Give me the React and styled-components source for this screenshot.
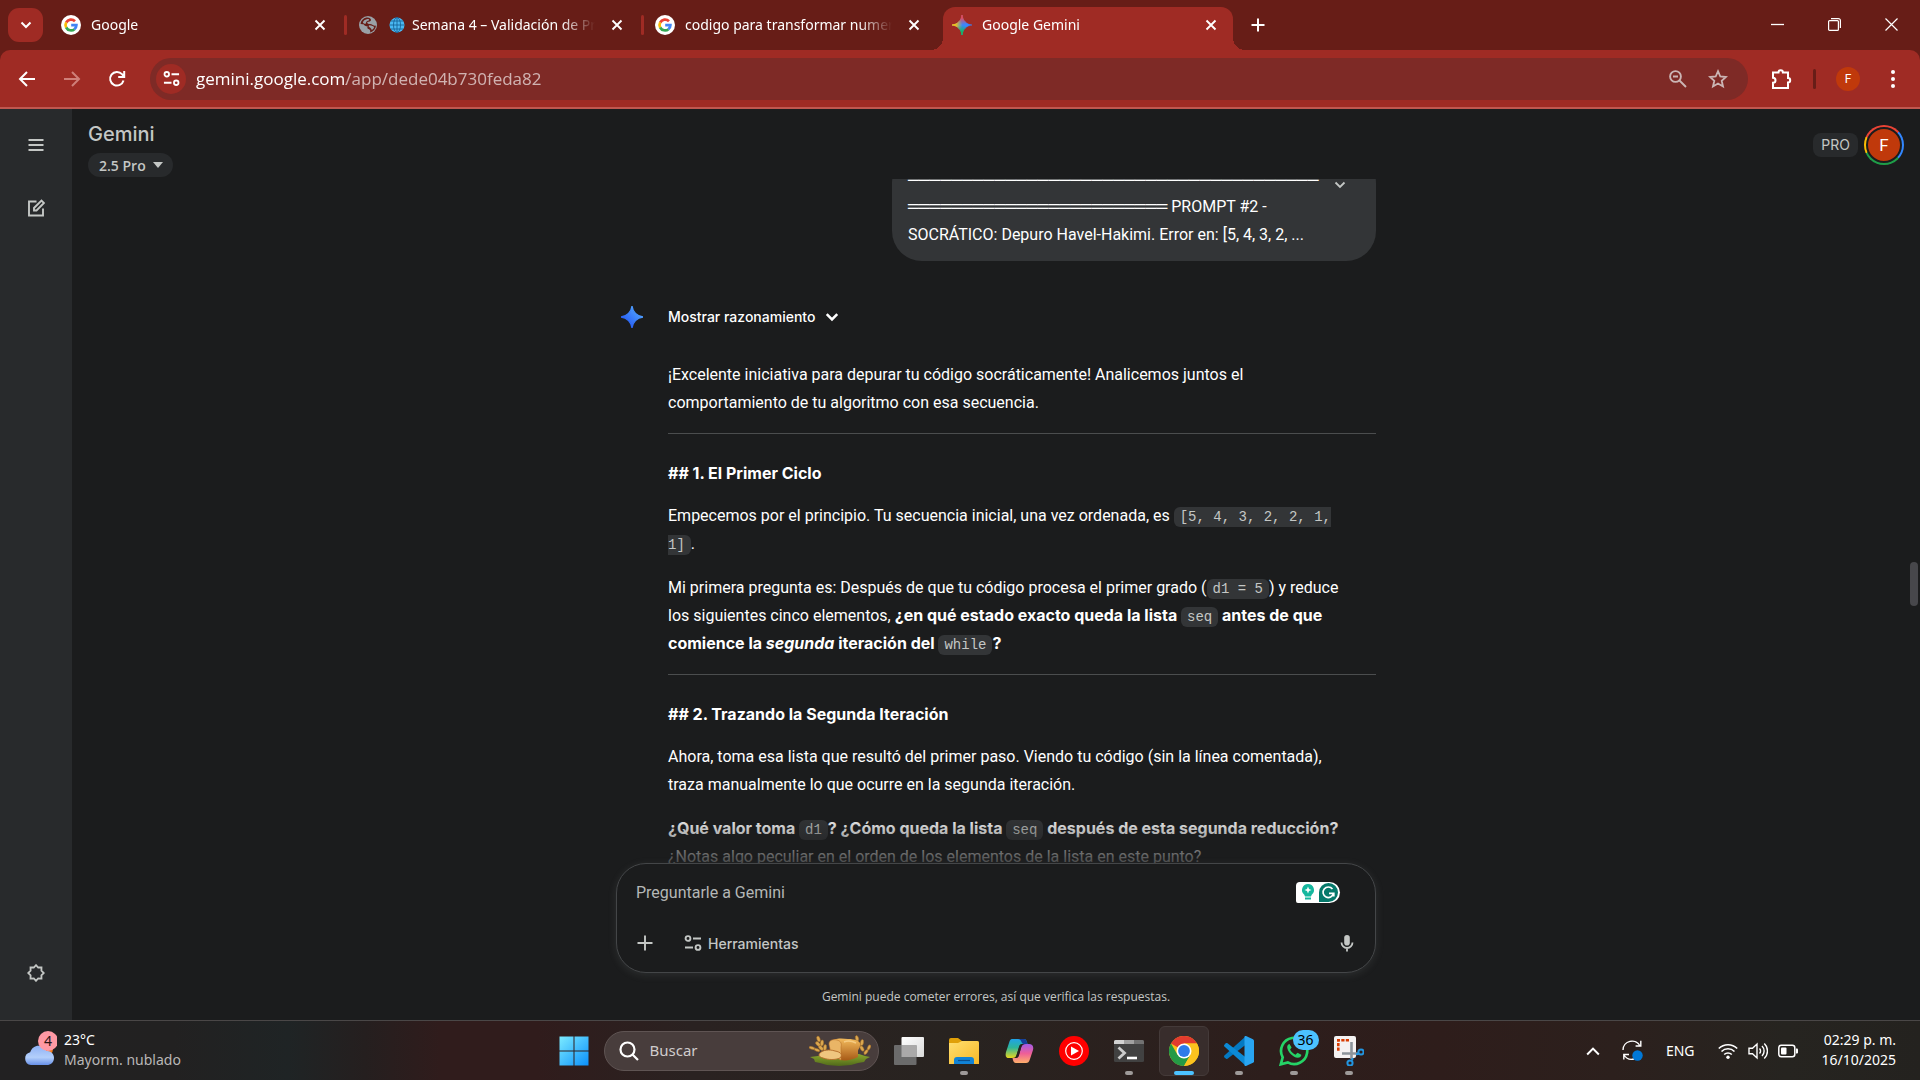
import React from 'react';
import styled, { createGlobalStyle, css } from 'styled-components';

const fonts = {
  system: '"Noto Sans", "Open Sans", sans-serif',
  text: 'Roboto, "Liberation Sans", sans-serif',
  brand: 'Inter, Roboto, sans-serif',
  mono: '"Liberation Mono", "DejaVu Sans Mono", monospace',
};

const GlobalStyle = createGlobalStyle`
  *, *::before, *::after { box-sizing: border-box; }
  html, body { margin: 0; background: #1b1c1d; }
  body { font-family: ${fonts.text}; color: #fff; overflow: hidden; }
  button { padding: 0; border: 0; background: none; color: inherit; font: inherit; cursor: pointer; }
  input, textarea { border: 0; outline: 0; background: none; color: inherit; font: inherit; padding: 0; }
  svg { display: block; flex: none; }
`;

const Screen = styled.div`
  display: flex;
  flex-direction: column;
  height: 100vh;
`;

/* ---------- browser frame ---------- */

const BrowserFrame = styled.header`
  background: #671d17;
  font-family: ${fonts.system};
`;

const TabStrip = styled.div`
  display: flex;
  align-items: stretch;
  height: 50px;
`;

const TabSearch = styled.button`
  display: grid;
  place-items: center;
  align-self: center;
  width: 35px;
  height: 34px;
  margin: 0 9px 0 8px;
  border-radius: 11px;
  background: #9f2b24;
`;

const Tab = styled.div`
  position: relative;
  display: flex;
  align-items: center;
  flex: 0 1 290px;
  min-width: 0;
  gap: 10px;
  margin-top: 7px;
  padding: 0 12px 7px 9px;
  font-size: 14px;
  line-height: 20px;
  ${({ $active }) => $active && css`
    background: #9f2b24;
    border-radius: 12px 12px 0 0;
    &::before, &::after {
      content: '';
      position: absolute;
      bottom: 0;
      width: 12px;
      height: 12px;
    }
    &::before { right: 100%; background: radial-gradient(circle at 0 0, transparent 12px, #9f2b24 12px); }
    &::after { left: 100%; background: radial-gradient(circle at 100% 0, transparent 12px, #9f2b24 12px); }
  `}
`;

const TabTitle = styled.span`
  flex: 1;
  min-width: 0;
  overflow: hidden;
  white-space: nowrap;
  mask-image: linear-gradient(90deg, #000 calc(100% - 36px), transparent calc(100% - 2px));
`;

const IconButton = styled.button`
  display: grid;
  place-items: center;
  flex: none;
  width: ${({ $size = 20 }) => $size}px;
  height: ${({ $size = 20 }) => $size}px;
  border-radius: 50%;
  color: ${({ $color = '#fff' }) => $color};
`;

const TabDivider = styled.i`
  flex: none;
  align-self: center;
  width: 3px;
  height: 20px;
  margin: 0 2px;
  border-radius: 2px;
  background: ${({ $hidden }) => ($hidden ? 'transparent' : '#9f2b24')};
`;

const NewTab = styled(IconButton)`
  align-self: center;
  margin-left: 10px;
`;

const WindowButtons = styled.div`
  display: flex;
  margin-left: auto;
`;

const WindowButton = styled.button`
  display: grid;
  place-items: center;
  width: 57px;
  height: 48px;
`;

const Toolbar = styled.div`
  display: flex;
  align-items: center;
  height: 59px;
  padding: 0 12px;
  border-bottom: 2px solid #c0574f;
  border-radius: 10px 10px 0 0;
  background: #9f2b24;
`;

const NavButtons = styled.nav`
  display: flex;
  gap: 15px;
  margin-right: 18px;
`;

const AddressBar = styled.form`
  display: flex;
  align-items: center;
  flex: 1;
  height: 42px;
  padding: 0 15px 0 6px;
  border-radius: 21px;
  background: #7e2a26;
`;

const SiteInfo = styled(IconButton)`
  margin-right: 10px;
  background: #9f2b24;
`;

const AddressInput = styled.input`
  flex: 1;
  min-width: 0;
  height: 28px;
  font-family: "Open Sans", "Noto Sans", sans-serif;
  font-size: 17px;
  mask-image: linear-gradient(90deg, #000 150px, rgba(0, 0, 0, 0.64) 150px);
`;

const AddressActions = styled.div`
  display: flex;
  gap: 10px;
`;

const ToolbarActions = styled.div`
  display: flex;
  align-items: center;
  margin-left: 18px;
`;

const ToolbarDivider = styled.i`
  width: 3px;
  height: 20px;
  margin: 0 20px 0 17px;
  border-radius: 2px;
  background: #671d17;
`;

const ProfileBadge = styled.button`
  width: 24px;
  height: 24px;
  margin-right: 18px;
  border-radius: 50%;
  background: #c0390b;
  font-family: ${fonts.text};
  font-size: 12px;
`;

/* ---------- application ---------- */

const AppArea = styled.div`
  display: flex;
  flex: 1;
  min-height: 0;
  background: #1b1c1d;
`;

const SideRail = styled.aside`
  display: flex;
  flex-direction: column;
  align-items: center;
  gap: 27px;
  width: 72px;
  padding: 18px 0 29px;
  background: #282a2c;
`;

const RailSpacer = styled.span`
  flex: 1;
`;

const Workspace = styled.div`
  position: relative;
  display: flex;
  flex-direction: column;
  flex: 1;
  min-width: 0;
`;

const TopBar = styled.div`
  display: flex;
  justify-content: space-between;
  flex: none;
  height: 70px;
  padding: 12px 16px 0;
  color: #c4c7c5;
  font-family: ${fonts.brand};
`;

const Brand = styled.h1`
  margin: 0 0 6px;
  font-size: 20px;
  font-weight: 500;
  line-height: 26px;
`;

const ModelButton = styled.button`
  display: flex;
  align-items: center;
  gap: 7px;
  height: 24px;
  padding: 0 10px 0 11px;
  border-radius: 12px;
  background: #282a2c;
  font-family: "Open Sans", sans-serif;
  font-size: 14px;
  font-weight: 600;
`;

const Account = styled.div`
  display: flex;
  align-items: center;
  align-self: flex-start;
  gap: 6px;
  height: 48px;
`;

const PlanBadge = styled.span`
  padding: 0 8px;
  border-radius: 8px;
  background: #282a2c;
  font-size: 14px;
  line-height: 24px;
`;

const AvatarRing = styled.button`
  width: 40px;
  height: 40px;
  padding: 2px;
  border-radius: 50%;
  background: conic-gradient(#ea4335 0 48deg, #3186ff 48deg 132deg, #1e9e48 132deg 246deg, #fbbc04 246deg 294deg, #ea4335 294deg);
`;

const Avatar = styled.span`
  display: grid;
  place-items: center;
  height: 36px;
  border: 2px solid #1b1c1d;
  border-radius: 50%;
  background: #c0390b;
  color: #fff;
  font-family: ${fonts.text};
  font-size: 17px;
`;

const Chat = styled.main`
  flex: 1;
  min-height: 0;
  overflow: hidden;
`;

const Column = styled.div`
  width: 100%;
  max-width: 760px;
  margin: 0 auto;
`;

const PromptBubble = styled.section`
  display: flex;
  width: 484px;
  margin: -26px 0 0 auto;
  padding: 12px 26px 12px 16px;
  border-radius: 30px;
  background: #333537;
`;

const PromptText = styled.p`
  flex: 1;
  margin: 0;
  font-size: 16px;
  line-height: 28px;
  white-space: nowrap;
`;

const DoubleRule = styled.span`
  font-family: ${fonts.mono};
  font-size: 18px;
  line-height: 20px;
`;

const ExpandButton = styled(IconButton)`
  margin-top: 10px;
`;

const Answer = styled.article`
  display: flex;
  gap: 25px;
  padding: 42px 0 0 5px;
`;

const AnswerMark = styled.span`
  display: grid;
  place-items: center;
  align-self: flex-start;
  width: 22px;
  height: 28px;
`;

const AnswerBody = styled.div`
  flex: 1;
  font-size: 16px;
  line-height: 28px;
  white-space: nowrap;

  p { margin: 0 0 16px; }
  strong, h3 { font-family: ${fonts.brand}; font-weight: 700; }
  strong { line-height: 20px; }
  h3 { margin: 0 0 15px; font-size: 16px; line-height: 28px; }
  hr { height: 1px; margin: 16px 0 25px; border: 0; background: #4b4d4e; }
  code {
    padding: 2px 6px;
    border-radius: 6px;
    background: #333537;
    color: #c4c7c5;
    font-family: ${fonts.mono};
    font-size: 14px;
    font-weight: 400;
    line-height: 20px;
  }
`;

const ReasoningToggle = styled.button`
  display: flex;
  align-items: center;
  gap: 10px;
  height: 28px;
  margin-bottom: 30px;
  font-family: ${fonts.brand};
  font-size: 14px;
  font-weight: 500;
`;

const Footer = styled.footer`
  position: relative;
  flex: none;
  background: #1b1c1d;
  &::before {
    content: '';
    position: absolute;
    inset: -50px 0 100%;
    background: linear-gradient(rgba(27, 28, 29, 0), rgba(27, 28, 29, 0.8));
  }
`;

const Composer = styled.form`
  position: relative;
  display: flex;
  flex-direction: column;
  justify-content: space-between;
  height: 110px;
  padding: 14px 16px 17px 19px;
  border: 1px solid #444648;
  border-radius: 30px;
  background: #1b1c1d;
  box-shadow: 0 2px 8px rgba(154, 160, 166, 0.14);
`;

const ComposerRow = styled.div`
  display: flex;
  align-items: center;
  justify-content: space-between;
`;

const PromptInput = styled.input`
  flex: 1;
  height: 28px;
  font-size: 16px;
  &::placeholder { color: #b4b7b6; opacity: 1; }
`;

const WritingBadge = styled.button`
  display: flex;
  align-items: center;
  gap: 2px;
  width: 44px;
  height: 21px;
  margin-right: 19px;
  padding: 0 2px 0 3px;
  border-radius: 4px 11px 11px 2px;
  background: #fff;
`;

const ComposerTools = styled.div`
  display: flex;
  align-items: center;
  gap: 30px;
  color: #c4c7c5;
`;

const ToolsButton = styled.button`
  display: flex;
  align-items: center;
  gap: 6px;
  font-family: ${fonts.brand};
  font-size: 14px;
  font-weight: 500;
`;

const Disclaimer = styled.p`
  margin: 0;
  padding: 13px 0 13px;
  color: #c4c7c5;
  font-family: "Open Sans", sans-serif;
  font-size: 12px;
  line-height: 21px;
  text-align: center;
`;

const ScrollThumb = styled.i`
  position: absolute;
  top: 453px;
  right: 2px;
  width: 8px;
  height: 44px;
  border-radius: 4px;
  background: #47474b;
`;

/* ---------- taskbar ---------- */

const Taskbar = styled.footer`
  display: grid;
  grid-template-columns: 1fr auto 1fr;
  align-items: center;
  flex: none;
  height: 60px;
  border-top: 1px solid #4a4747;
  background: linear-gradient(90deg, #222122 0, #222121 9%, #1f2425 15%, #251f1f 19%, #301c1c 23%, #301c1c 28%, #2a2221 36%, #282320 50%, #2d1e1c 66%, #2e1d1b 75%, #2c201d 84%, #262420 93%, #24221f 100%);
  font-family: ${fonts.system};
`;

const Weather = styled.button`
  display: flex;
  align-items: center;
  gap: 7px;
  margin-left: 24px;
  padding-bottom: 2px;
  text-align: left;
  font-size: 14px;
  line-height: 20px;
`;

const WeatherDetail = styled.span`
  display: block;
  color: ${({ $muted }) => ($muted ? '#b9b7b7' : '#fff')};
`;

const TaskList = styled.div`
  display: flex;
  align-items: center;
  gap: 5px;
  padding-left: 2px;
`;

const TaskButton = styled.button`
  position: relative;
  display: grid;
  place-items: center;
  width: 50px;
  height: 50px;
  border: 1px solid ${({ $active }) => ($active ? '#443a39' : 'transparent')};
  border-radius: 6px;
  background: ${({ $active }) => ($active ? '#382d2c' : 'none')};
  &::after {
    content: '';
    position: absolute;
    bottom: 0;
    left: 50%;
    width: ${({ $active }) => ($active ? 20 : 8)}px;
    height: 4px;
    border-radius: 2px;
    background: ${({ $active }) => ($active ? '#4cc2ff' : '#9e9a99')};
    transform: translateX(-50%);
    display: ${({ $running }) => ($running ? 'block' : 'none')};
  }
`;

const CountBadge = styled.span`
  position: absolute;
  top: 3px;
  right: -1px;
  min-width: 26px;
  border-radius: 10px;
  background: #4cc2ff;
  color: #000;
  font-size: 14px;
  line-height: 20px;
  text-align: center;
`;

const TaskSearch = styled.label`
  display: flex;
  align-items: center;
  gap: 11px;
  width: 275px;
  height: 40px;
  padding: 0 7px 0 14px;
  border: 1px solid #5f5453;
  border-radius: 20px;
  background: #483d3c;
`;

const TaskSearchInput = styled.input`
  flex: 1;
  min-width: 0;
  padding-bottom: 2px;
  font-size: 15px;
  &::placeholder { color: #d0cccc; opacity: 1; }
`;

const Tray = styled.div`
  display: flex;
  align-items: center;
  justify-content: flex-end;
  padding-right: 24px;
`;

const TrayButton = styled.button`
  display: flex;
  align-items: center;
  gap: 10px;
  margin-right: ${({ $gap = 20 }) => $gap}px;
  font-size: 14px;
`;

const Clock = styled.time`
  padding-bottom: 2px;
  font-size: 14px;
  line-height: 20px;
  text-align: right;
`;

/* ---------- icons ---------- */

const Stroke = ({ size = 20, box = 20, w = 2, children, ...rest }) => (
  <svg width={size} height={size} viewBox={`0 0 ${box} ${box}`} fill="none" stroke="currentColor" strokeWidth={w} aria-hidden="true" {...rest}>
    {children}
  </svg>
);

const Chevron = ({ size = 12, w = 2, up }) => (
  <Stroke size={size} box={12} w={w}>
    <path d={up ? 'M1 9l5-5 5 5' : 'M1.5 3.5L6 8l4.500-4.500'} />
  </Stroke>
);

const CloseIcon = () => (
  <Stroke size={12} box={12} w={1.9}><path d="M1.500 1.500l9 9M10.500 1.500l-9 9" /></Stroke>
);

const GoogleFavicon = () => (
  <svg width="20" height="20" viewBox="0 0 20 20" aria-hidden="true">
    <circle cx="10" cy="10" r="10" fill="#fff" />
    <g fill="none" strokeWidth="2.700">
      <path d="M14 6.200A5.500 5.500 0 0 0 5.200 7.500" stroke="#ea4335" />
      <path d="M5.200 7.400a5.500 5.500 0 0 0 0 5.200" stroke="#fbbc05" />
      <path d="M5.200 12.500a5.500 5.500 0 0 0 8.300 1.700" stroke="#34a853" />
      <path d="M13.400 14.200A5.500 5.500 0 0 0 15.400 10.100H10.200" stroke="#4285f4" />
    </g>
  </svg>
);

const GlobeFavicon = () => (
  <svg width="20" height="20" viewBox="0 0 20 20" aria-hidden="true">
    <circle cx="10" cy="10" r="9" fill="#9aa0a6" />
    <path d="M8.500 2.500c2.500-.4 4.500.8 4.500 2.400 0 1.400-1.500 1.600-3 1.800-1 .2-1 1.200-.2 1.800 1.200.8 3.200.3 5 1.500 1.500 1 2.200.9 3.200.5-.3 3.500-2.600 6.200-6 7 .6-1.400.2-2.700-1-3.200-1.600-.6-2.200-1.700-1.200-2.900-2-.1-3.700-1-4.600-2.400-.9.300-1.800.3-2.700-.2.500-3.200 2.700-5.600 6-6.300z" fill="#671d17" />
    <path d="M8.700 4.300c1.500-.5 2.600 0 2.400.8-.2.900-1.800.6-2.700 1.600-.8 1 .1 1.900-1 2.100-1 .1-2-.4-2.500-1.400.5-1.600 2-2.700 3.800-3.100zM11.500 10.300c1.500-.2 3 .7 4.700 1.700-.5 1.600-1.500 2.600-2.500 3-.2-1.500-1.500-2.100-2.500-2.900-.8-.7-.6-1.600.3-1.800z" fill="#9aa0a6" />
  </svg>
);

const GlobeDrawing = styled.svg`
  display: inline-block;
  margin: 0 7px 0 1px;
  vertical-align: -3px;
`;

const GlobeGlyph = () => (
  <GlobeDrawing width="16" height="16" viewBox="0 0 16 16" aria-hidden="true">
    <circle cx="8" cy="8" r="7.500" fill="#4ab8f2" />
    <g fill="none" stroke="#17649a" strokeWidth="0.900">
      <ellipse cx="8" cy="8" rx="3.500" ry="7.500" />
      <path d="M8 .5v15M.5 8h15M1.700 4h12.600M1.700 12h12.600" />
    </g>
  </GlobeDrawing>
);

const sparkPath = 'M12 0C12.700 6.500 17.500 11.300 24 12 17.500 12.700 12.700 17.500 12 24 11.300 17.500 6.500 12.700 0 12 6.500 11.300 11.300 6.500 12 0z';

const GeminiFavicon = () => (
  <svg width="20" height="20" viewBox="0 0 24 24" aria-hidden="true">
    <defs>
      <radialGradient id="favRed" cx=".5" cy="0" r=".5"><stop offset=".2" stopColor="#f2464b" /><stop offset="1" stopColor="#f2464b" stopOpacity="0" /></radialGradient>
      <radialGradient id="favYellow" cx="0" cy=".5" r=".52"><stop offset=".3" stopColor="#fbc60a" /><stop offset="1" stopColor="#fbc60a" stopOpacity="0" /></radialGradient>
      <radialGradient id="favGreen" cx=".5" cy="1" r=".5"><stop offset=".3" stopColor="#12b95c" /><stop offset="1" stopColor="#12b95c" stopOpacity="0" /></radialGradient>
    </defs>
    <path d={sparkPath} fill="#3a86ff" stroke="#3a86ff" strokeWidth=".6" />
    <path d={sparkPath} fill="url(#favRed)" stroke="url(#favRed)" />
    <path d={sparkPath} fill="url(#favYellow)" stroke="url(#favYellow)" />
    <path d={sparkPath} fill="url(#favGreen)" stroke="url(#favGreen)" />
  </svg>
);

const Spark = () => (
  <svg width="22" height="22" viewBox="0 0 24 24" aria-hidden="true">
    <defs>
      <linearGradient id="sparkBlue" x1="0" y1="1" x2="1" y2="0"><stop offset="0.250" stopColor="#2a62f5" /><stop offset="0.800" stopColor="#4fa0ff" /></linearGradient>
    </defs>
    <path d={sparkPath} fill="url(#sparkBlue)" stroke="url(#sparkBlue)" strokeWidth="1.400" />
  </svg>
);

const TuneIcon = ({ size = 18 }) => (
  <Stroke size={size} box={18} w={1.900}>
    <circle cx="4" cy="4.500" r="2.400" />
    <path d="M9 4.500h8M1 13.500h8" />
    <circle cx="14" cy="13.500" r="2.400" />
  </Stroke>
);

const WindowsLogo = () => (
  <svg width="30" height="30" viewBox="0 0 30 30" aria-hidden="true">
    <defs><linearGradient id="win" x1="0" y1="0" x2="1" y2="1"><stop offset="0" stopColor="#7cebff" /><stop offset="1" stopColor="#0b90fb" /></linearGradient></defs>
    <path d="M.5.5h14v14H.5zM15.500.5h14v14h-14zM.5 15.500h14v14H.5zM15.500 15.500h14v14h-14z" fill="url(#win)" />
  </svg>
);

const BreadArt = () => (
  <svg width="62" height="32" viewBox="0 0 62 32" aria-hidden="true">
    <defs>
      <linearGradient id="crust" x1="0" y1="0" x2="0" y2="1"><stop offset="0" stopColor="#f3bb5c" /><stop offset="1" stopColor="#a75a17" /></linearGradient>
      <linearGradient id="grass" x1="0" y1="0" x2="0" y2="1"><stop offset="0" stopColor="#8aa82c" /><stop offset="1" stopColor="#50691a" /></linearGradient>
    </defs>
    <path d="M1 22l8-1c4-1 8-2 13-2h28l6 2 5 1-4 2-2 3-6 1-7 2-12 1-12-1-7-2-5-1-1-3z" fill="url(#grass)" />
    <g fill="#dca850" stroke="#a36c25" strokeWidth=".5">
      <ellipse cx="9.500" cy="4" rx="1.600" ry="3" transform="rotate(-20 9.500 4)" />
      <ellipse cx="9" cy="9" rx="1.600" ry="3" transform="rotate(-45 9 9)" />
      <ellipse cx="13" cy="8" rx="1.600" ry="3" transform="rotate(5 13 8)" />
      <ellipse cx="12" cy="13" rx="1.600" ry="3" transform="rotate(-45 12 13)" />
      <ellipse cx="16" cy="12.500" rx="1.600" ry="3" transform="rotate(5 16 12.500)" />
      <ellipse cx="3" cy="13" rx="1.400" ry="3" transform="rotate(-75 3 13)" />
      <ellipse cx="8" cy="15" rx="1.400" ry="3" transform="rotate(-70 8 15)" />
      <ellipse cx="48" cy="3.500" rx="1.600" ry="3" transform="rotate(-15 48 3.500)" />
      <ellipse cx="49.500" cy="8.500" rx="1.600" ry="3" transform="rotate(-40 49.500 8.500)" />
      <ellipse cx="53" cy="7.500" rx="1.600" ry="3" transform="rotate(10 53 7.500)" />
      <ellipse cx="53" cy="13.500" rx="1.600" ry="3" transform="rotate(-30 53 13.500)" />
      <ellipse cx="60" cy="12.500" rx="1.400" ry="2.800" transform="rotate(25 60 12.500)" />
      <ellipse cx="57" cy="17" rx="1.400" ry="2.800" transform="rotate(40 57 17)" />
    </g>
    <path d="M22 7c2-4 10-4 17-3 7 0 12 2 12 6 0 3-2 4-2 6v6c-6 3-12 4-18 3z" fill="url(#crust)" />
    <path d="M20 9c0-4 4-5 8-4 4 1 5 4 4 7v13l-11-5v-6c0-2-1-3-1-5z" fill="#eab566" stroke="#ba722a" strokeWidth=".6" />
    <path d="M11 18c3-3 9-4 15-2 6 1 8 4 5 7-5 2-11 2-17 0-4-1-5-3-3-5z" fill="#efc67f" stroke="#b26a27" strokeWidth=".9" />
    <path d="M35 7c5-2 8-1 12 1" stroke="#ffe0a0" strokeWidth="1.500" fill="none" opacity=".6" />
  </svg>
);

const TaskViewIcon = () => (
  <svg width="30" height="30" viewBox="0 0 30 30" aria-hidden="true">
    <defs><linearGradient id="tv" x1="0" y1="0" x2="1" y2="1"><stop offset="0" stopColor="#fff" /><stop offset="1" stopColor="#dadada" /></linearGradient></defs>
    <rect x="7.500" y="1" width="22.500" height="20" rx="1" fill="url(#tv)" />
    <rect y="9" width="22.500" height="20" rx="1" fill="#6b6b6b" />
    <rect x="7.500" y="9" width="15" height="12" fill="#aaa9a9" />
  </svg>
);

const FolderIcon = () => (
  <svg width="30" height="30" viewBox="0 0 30 30" aria-hidden="true">
    <defs><linearGradient id="fold" x1="0" y1="0" x2="1" y2="1"><stop offset="0" stopColor="#ffdf70" /><stop offset="1" stopColor="#f8b826" /></linearGradient></defs>
    <path d="M0 4a2 2 0 0 1 2-2h7l4 3h15a2 2 0 0 1 2 2v5H0z" fill="#e0a008" />
    <path d="M0 7h9l4-2h15a2 2 0 0 1 2 2v21H0z" fill="url(#fold)" />
    <path d="M5 28v-4a3 3 0 0 1 3-3h14a3 3 0 0 1 3 3v4z" fill="#1183d6" />
    <path d="M9 24.500h12" stroke="#0a4f8d" strokeWidth="1.200" />
  </svg>
);

const CopilotIcon = () => (
  <svg width="30" height="30" viewBox="0 0 30 30" aria-hidden="true">
    <defs>
      <linearGradient id="cpA" x1="0" y1="0" x2="0" y2="1"><stop offset="0" stopColor="#1fa3e8" /><stop offset=".45" stopColor="#2db59a" /><stop offset="1" stopColor="#e9d71d" /></linearGradient>
      <linearGradient id="cpB" x1="0" y1="0" x2="0" y2="1"><stop offset="0" stopColor="#a25be8" /><stop offset=".5" stopColor="#ef5f97" /><stop offset="1" stopColor="#ffb06b" /></linearGradient>
    </defs>
    <path d="M8 3h12c2 0 3 2 3.500 5h-5c-2 0-3 1-3.500 3l-2 7c-1 3-2 4-5 4H5c-3 0-4-2-3-6l3-9c1-3 1.500-4 3-4z" fill="url(#cpA)" />
    <path d="M14 3h6c2 0 3 2 3.500 5h-4c-2 0-2-5-5.500-5z" fill="#163f9b" />
    <path d="M22 27H12c-2 0-3-2-3.500-5h3c2 0 3-1 3.500-3l2-7c1-3 2-4 5-4h3c3 0 5 2 4 6l-3 9c-1 3-2 4-4 4z" fill="url(#cpB)" />
    <path d="M15.200 10.500c.5-1.600 1.300-2.500 3-2.500h1.300c-1.500.8-2 2-2.500 4l-2 7c-.5 1.800-1.300 3-3.500 3h-.7c1-.8 1.500-2 2-4z" fill="#282220" />
  </svg>
);

const MusicIcon = () => (
  <svg width="30" height="30" viewBox="0 0 30 30" aria-hidden="true">
    <circle cx="15" cy="15" r="15" fill="#f00" />
    <circle cx="15" cy="15" r="8.300" fill="none" stroke="#fff" strokeWidth="1.200" />
    <path d="M12 10.500l8 4.500-8 4.500z" fill="#fff" />
  </svg>
);

const TerminalIcon = () => (
  <svg width="30" height="30" viewBox="0 0 30 30" aria-hidden="true">
    <rect y="4" width="30" height="22" rx="1.500" fill="#414141" />
    <path d="M0 8V5.500A1.500 1.500 0 0 1 1.500 4H10v4z" fill="#d2d2d2" />
    <path d="M10 4h10v4H10z" fill="#a0a0a0" />
    <path d="M20 4h8.500A1.500 1.500 0 0 1 30 5.500V8H20z" fill="#727272" />
    <path d="M4.500 11.500l6 5.500-6 5.500" fill="none" stroke="#ccc" strokeWidth="2.800" />
    <path d="M13 22h10" stroke="#fff" strokeWidth="2.600" />
  </svg>
);

const ChromeIcon = () => (
  <svg width="30" height="30" viewBox="0 0 30 30" aria-hidden="true">
    <circle cx="15" cy="15" r="15" fill="#fbc116" />
    <path d="M15 15L2 7.500A15 15 0 0 1 28 7.500H15z" fill="#e33b2e" />
    <path d="M2 7.500A15 15 0 0 0 15 30l6.500-11.300L15 15 8.500 18.700z" fill="#249a46" />
    <path d="M28 7.500H15l6.500 11.200L15 30A15 15 0 0 0 28 7.500z" fill="#fcc31e" />
    <circle cx="15" cy="15" r="7.500" fill="#fff" />
    <circle cx="15" cy="15" r="5.900" fill="#2d7bea" />
  </svg>
);

const CodeIcon = () => (
  <svg width="30" height="30" viewBox="0 0 30 30" aria-hidden="true">
    <path d="M22 0v8.500L3.500 22.800c-.5.300-1 .3-1.500-.1L.4 21.200c-.5-.5-.5-1.300 0-1.800z" fill="#0479c2" />
    <path d="M22 30v-8.500L3.500 7.200c-.5-.3-1-.3-1.500.1L.4 8.800c-.5.500-.5 1.300 0 1.800z" fill="#0c8ad6" />
    <path d="M22 0l7 3.200c.6.300 1 .9 1 1.600v20.400c0 .7-.4 1.300-1 1.600L22 30c-1 .2-1.500-.3-1.500-1V1c0-.7.500-1.200 1.500-1z" fill="#29a5f2" />
  </svg>
);

const WhatsAppIcon = () => (
  <svg width="30" height="30" viewBox="0 0 30 30" aria-hidden="true">
    <path d="M1.800 28.300l1.900-7A13.100 13.100 0 1 1 8.800 26.400z" fill="none" stroke="#25d366" strokeWidth="2.700" />
    <path d="M10.500 8c-1 0-2.500 1.200-2.300 3.500.5 4.500 6 10 10.500 10.300 2.500 0 3.800-1.600 3.600-3.100l-3.800-2-2 2c-2.500-1-4.300-2.800-5.400-5.200l1.500-1.900z" fill="#25d366" />
  </svg>
);

const SnipIcon = () => (
  <svg width="30" height="30" viewBox="0 0 30 30" aria-hidden="true">
    <rect width="22" height="22" rx="2" fill="#f4f2f2" />
    <path d="M15 4.300H4.300V16" fill="none" stroke="#d83b01" strokeWidth="2.600" strokeDasharray="3.200 1.300" />
    <path d="M17.500 6v17M8 17.500h16" stroke="#8c949b" strokeWidth="2.600" />
    <g fill="none" stroke="#2295e0" strokeWidth="2"><circle cx="27" cy="16" r="2.600" /><circle cx="16" cy="27" r="2.600" /><path d="M22 18.500l3-1M18 24.500l.7-2.500" /></g>
  </svg>
);

const WeatherIcon = () => (
  <svg width="33" height="38" viewBox="0 0 33 38" aria-hidden="true">
    <defs><linearGradient id="cloud" x1="0" y1="0" x2="0" y2="1"><stop offset="0" stopColor="#8fb2f5" /><stop offset=".6" stopColor="#b3cffb" /><stop offset="1" stopColor="#6790e8" /></linearGradient></defs>
    <circle cx="22" cy="18" r="7" fill="#f27a1a" />
    <path d="M7 34a6.500 6.500 0 0 1-.8-12.800C8 16 13 13.500 18 15.500c2 .9 3.500 2.500 4.500 4.500 4-.5 7.500 2.500 7.500 7s-3.500 7-7 7z" fill="url(#cloud)" />
    <circle cx="24" cy="10" r="10" fill="#ff99a4" />
    <text x="24" y="15" textAnchor="middle" fontSize="14" fill="#2b1517">4</text>
  </svg>
);

const tabs = [
  { title: 'Google', icon: <GoogleFavicon /> },
  { title: 'Semana 4 – Validación de Propiedades', icon: <GlobeFavicon />, glyph: true },
  { title: 'codigo para transformar numeros', icon: <GoogleFavicon /> },
  { title: 'Google Gemini', icon: <GeminiFavicon />, active: true },
];

const tasks = [
  { label: 'Vista de tareas', icon: <TaskViewIcon /> },
  { label: 'Explorador de archivos', icon: <FolderIcon />, running: true },
  { label: 'Copilot', icon: <CopilotIcon /> },
  { label: 'YouTube Music', icon: <MusicIcon /> },
  { label: 'Terminal', icon: <TerminalIcon />, running: true },
  { label: 'Google Chrome', icon: <ChromeIcon />, running: true, active: true },
  { label: 'Visual Studio Code', icon: <CodeIcon />, running: true },
  { label: 'WhatsApp', icon: <WhatsAppIcon />, running: true, count: 36 },
  { label: 'Recortes', icon: <SnipIcon />, running: true },
];

function Browser() {
  return (
    <BrowserFrame>
      <TabStrip>
        <TabSearch aria-label="Buscar pestañas"><Chevron size={12} w={2} /></TabSearch>
        {tabs.map((tab, i) => (
          <React.Fragment key={tab.title}>
            {i > 0 && <TabDivider $hidden={tab.active} />}
            <Tab $active={tab.active}>
              {tab.icon}
              <TabTitle>{tab.glyph && <GlobeGlyph />}{tab.title}</TabTitle>
              <IconButton aria-label="Cerrar pestaña"><CloseIcon /></IconButton>
            </Tab>
          </React.Fragment>
        ))}
        <NewTab aria-label="Nueva pestaña" $size={30}>
          <Stroke size={14} box={14}><path d="M7 0.500v13M.5 7h13" /></Stroke>
        </NewTab>
        <WindowButtons>
          <WindowButton aria-label="Minimizar"><Stroke size={13} box={13} w={1.300}><path d="M0 6.500h13" /></Stroke></WindowButton>
          <WindowButton aria-label="Restaurar">
            <Stroke size={13} box={13} w={1.200}><rect x="0.600" y="2.600" width="9.800" height="9.800" rx="1" /><path d="M3 .6h7.400a2 2 0 0 1 2 2V10" /></Stroke>
          </WindowButton>
          <WindowButton aria-label="Cerrar"><Stroke size={13} box={13} w={1.200}><path d="M.5.5l12 12M12.500.5l-12 12" /></Stroke></WindowButton>
        </WindowButtons>
      </TabStrip>
      <Toolbar>
        <NavButtons>
          <IconButton $size={30} aria-label="Atrás"><Stroke><path d="M18 10H3M10 3l-7 7 7 7" /></Stroke></IconButton>
          <IconButton $size={30} $color="#cf7f79" aria-label="Adelante"><Stroke><path d="M2 10h15M10 3l7 7-7 7" /></Stroke></IconButton>
          <IconButton $size={30} aria-label="Recargar"><Stroke><path d="M16.500 11.500A6.800 6.800 0 1 1 15 5.200L17 7.500M17.200 2v6h-6" /></Stroke></IconButton>
        </NavButtons>
        <AddressBar onSubmit={(e) => e.preventDefault()}>
          <SiteInfo type="button" $size={30} aria-label="Información del sitio"><TuneIcon size={17} /></SiteInfo>
          <AddressInput aria-label="Dirección" defaultValue="gemini.google.com/app/dede04b730feda82" />
          <AddressActions>
            <IconButton type="button" $size={30} $color="#cbb5b4" aria-label="Zoom">
              <Stroke w={1.900}><circle cx="7.500" cy="7.500" r="5.400" /><path d="M11.500 11.500l6.500 6.500M5 7.500h5" /></Stroke>
            </IconButton>
            <IconButton type="button" $size={30} $color="#cbb5b4" aria-label="Marcador">
              <Stroke w={1.800}><path d="M10 2.200l2.300 5.300 5.600.5-4.200 3.800 1.300 5.700-5-3-5 3 1.300-5.700L2.100 8l5.600-.5z" /></Stroke>
            </IconButton>
          </AddressActions>
        </AddressBar>
        <ToolbarActions>
          <IconButton $size={30} aria-label="Extensiones">
            <Stroke size={22} box={22}><path d="M3 4.500h5.500a2.200 2.200 0 0 1 4.400 0H18v5.600a2.200 2.200 0 0 1 0 4.400V20H3v-5.200a2.500 2.500 0 0 0 0-5z" /></Stroke>
          </IconButton>
          <ToolbarDivider />
          <ProfileBadge>F</ProfileBadge>
          <IconButton $size={30} aria-label="Menú">
            <Stroke stroke="none" fill="currentColor"><circle cx="10" cy="3" r="2" /><circle cx="10" cy="10" r="2" /><circle cx="10" cy="17" r="2" /></Stroke>
          </IconButton>
        </ToolbarActions>
      </Toolbar>
    </BrowserFrame>
  );
}

function Conversation() {
  return (
    <Chat>
      <Column>
        <PromptBubble>
          <PromptText>
            <DoubleRule>{'═'.repeat(38)}</DoubleRule><br />
            <DoubleRule>{'═'.repeat(24)}</DoubleRule> PROMPT #2 -<br />
            SOCRÁTICO: Depuro Havel-Hakimi. Error en: [5, 4, 3, 2, ...
          </PromptText>
          <ExpandButton aria-label="Expandir" $color="#c4c7c5"><Chevron size={12} w={1.800} /></ExpandButton>
        </PromptBubble>
        <Answer>
          <AnswerMark><Spark /></AnswerMark>
          <AnswerBody>
            <ReasoningToggle>Mostrar razonamiento <Chevron size={14} w={2.200} /></ReasoningToggle>
            <p>¡Excelente iniciativa para depurar tu código socráticamente! Analicemos juntos el<br />comportamiento de tu algoritmo con esa secuencia.</p>
            <hr />
            <h3>## 1. El Primer Ciclo</h3>
            <p>Empecemos por el principio. Tu secuencia inicial, una vez ordenada, es <code>[5, 4, 3, 2, 2, 1,<br />1]</code>.</p>
            <p>
              Mi primera pregunta es: Después de que tu código procesa el primer grado (<code>d1 = 5</code>) y reduce<br />
              los siguientes cinco elementos, <strong>¿en qué estado exacto queda la lista <code>seq</code> antes de que<br />
              comience la <em>segunda</em> iteración del <code>while</code>?</strong>
            </p>
            <hr />
            <h3>## 2. Trazando la Segunda Iteración</h3>
            <p>Ahora, toma esa lista que resultó del primer paso. Viendo tu código (sin la línea comentada),<br />traza manualmente lo que ocurre en la segunda iteración.</p>
            <p>
              <strong>¿Qué valor toma <code>d1</code>? ¿Cómo queda la lista <code>seq</code> después de esta segunda reducción?</strong><br />
              ¿Notas algo peculiar en el orden de los elementos de la lista en este punto?
            </p>
          </AnswerBody>
        </Answer>
      </Column>
    </Chat>
  );
}

function GeminiApp() {
  return (
    <AppArea>
      <SideRail>
        <IconButton $size={36} $color="#c4c7c5" aria-label="Menú principal">
          <Stroke size={16} box={16}><path d="M.5 3h15M.5 8h15M.5 13h15" /></Stroke>
        </IconButton>
        <IconButton $size={36} $color="#c4c7c5" aria-label="Nueva conversación">
          <Stroke size={18} box={18} w={1.900}><path d="M9.500 2.500H2v14h14V9.500M7 11.500V9L14.500 1.500 17 4 9.500 11.500z" /></Stroke>
        </IconButton>
        <RailSpacer />
        <IconButton $size={36} $color="#c4c7c5" aria-label="Configuración">
          <Stroke size={18} box={18} w={1.800}><path d="M9 1.200l2.200 2.300 3.300-.1-.1 3.300L16.800 9l-2.400 2.300.1 3.300-3.300-.1L9 16.800l-2.200-2.300-3.300.1.1-3.300L1.200 9l2.400-2.300-.1-3.300 3.300.1z" /></Stroke>
        </IconButton>
      </SideRail>
      <Workspace>
        <TopBar>
          <div>
            <Brand>Gemini</Brand>
            <ModelButton aria-haspopup="menu">2.5 Pro
              <svg width="10" height="6" viewBox="0 0 10 6" fill="currentColor" aria-hidden="true"><path d="M0 0h10L5 6z" /></svg>
            </ModelButton>
          </div>
          <Account>
            <PlanBadge>PRO</PlanBadge>
            <AvatarRing aria-label="Cuenta"><Avatar>F</Avatar></AvatarRing>
          </Account>
        </TopBar>
        <Conversation />
        <Footer>
          <Column>
            <Composer onSubmit={(e) => e.preventDefault()}>
              <ComposerRow>
                <PromptInput aria-label="Preguntarle a Gemini" placeholder="Preguntarle a Gemini" />
                <WritingBadge type="button" aria-label="Asistente de escritura">
                  <svg width="18" height="18" viewBox="0 0 18 18" aria-hidden="true">
                    <path d="M9 1a6 6 0 0 1 3.700 10.700L12 13.500H6l-.7-1.800A6 6 0 0 1 9 1z" fill="#15b79e" />
                    <path d="M6 15.500h6" stroke="#15b79e" strokeWidth="2" />
                    <path d="M9 3.500l1 2.500 2.500 1-2.500 1-1 2.500L8 8 5.500 7 8 6z" fill="#fff" />
                  </svg>
                  <svg width="19" height="19" viewBox="0 0 19 19" aria-hidden="true">
                    <path d="M9.500 0a9.500 9.500 0 1 1 0 19H0V9.500A9.500 9.500 0 0 1 9.500 0z" fill="#05786a" />
                    <path d="M13.500 6A5.300 5.300 0 1 0 14.500 10.500M10 10.300h4.800v3.200" fill="none" stroke="#fff" strokeWidth="1.700" />
                  </svg>
                </WritingBadge>
              </ComposerRow>
              <ComposerRow>
                <ComposerTools>
                  <IconButton type="button" $size={18} $color="#c4c7c5" aria-label="Agregar archivos">
                    <Stroke size={16} box={16} w={1.900}><path d="M8 .5v15M.5 8h15" /></Stroke>
                  </IconButton>
                  <ToolsButton type="button"><TuneIcon size={18} /> Herramientas</ToolsButton>
                </ComposerTools>
                <IconButton type="button" $size={24} $color="#c4c7c5" aria-label="Micrófono">
                  <svg width="16" height="18" viewBox="0 0 16 18" aria-hidden="true">
                    <rect x="5.200" y="1" width="5.600" height="10.500" rx="2.800" fill="currentColor" />
                    <path d="M2.500 8.500a5.500 5.500 0 0 0 11 0M8 14v3.500" fill="none" stroke="currentColor" strokeWidth="1.800" />
                  </svg>
                </IconButton>
              </ComposerRow>
            </Composer>
          </Column>
          <Disclaimer>Gemini puede cometer errores, así que verifica las respuestas.</Disclaimer>
        </Footer>
        <ScrollThumb />
      </Workspace>
    </AppArea>
  );
}

function WindowsTaskbar() {
  return (
    <Taskbar>
      <div>
        <Weather>
          <WeatherIcon />
          <span><WeatherDetail>23°C</WeatherDetail><WeatherDetail $muted>Mayorm. nublado</WeatherDetail></span>
        </Weather>
      </div>
      <TaskList>
        <TaskButton aria-label="Inicio"><WindowsLogo /></TaskButton>
        <TaskSearch>
          <Stroke size={20} w={2.200}><circle cx="8.500" cy="8.500" r="7" /><path d="M13.500 13.500l5.500 5.500" /></Stroke>
          <TaskSearchInput aria-label="Buscar" placeholder="Buscar" />
          <BreadArt />
        </TaskSearch>
        {tasks.map((task) => (
          <TaskButton key={task.label} aria-label={task.label} $running={task.running} $active={task.active}>
            {task.icon}
            {task.count && <CountBadge>{task.count}</CountBadge>}
          </TaskButton>
        ))}
      </TaskList>
      <Tray>
        <TrayButton $gap={22} aria-label="Iconos ocultos"><Chevron size={14} w={1.700} up /></TrayButton>
        <TrayButton $gap={23} aria-label="Actualización">
          <Stroke size={21} box={21} w={1.400}>
            <path d="M1 10a9 9 0 0 1 17-4M18.800.8V6h-5.200M7 14.500H1.800v5M2 15a9 9 0 0 0 10 4" />
            <circle cx="15.500" cy="15.500" r="5.200" fill="#0078d7" stroke="none" />
          </Stroke>
        </TrayButton>
        <TrayButton $gap={23}>ENG</TrayButton>
        <TrayButton $gap={24} aria-label="Red, volumen y batería">
          <Stroke size={20} w={1.600}>
            <path d="M.8 7.500a13 13 0 0 1 18.400 0M3.500 10.500a9.200 9.200 0 0 1 13 0M6.200 13.500a5.400 5.400 0 0 1 7.600 0" />
            <circle cx="10" cy="16.300" r="1.700" fill="currentColor" stroke="none" />
          </Stroke>
          <Stroke size={20} w={1.400}>
            <path d="M1 7.200h3.500L9 3v14l-4.500-4.200H1zM11.500 7.500a3.500 3.500 0 0 1 0 5M14 5a7 7 0 0 1 0 10M16.300 2.500a10.500 10.500 0 0 1 0 15" />
          </Stroke>
          <svg width="20" height="14" viewBox="0 0 20 14" aria-hidden="true">
            <rect x=".8" y="1.300" width="16" height="11.400" rx="2.500" fill="none" stroke="#fff" strokeWidth="1.500" />
            <rect x="3" y="3.500" width="5.500" height="7" rx="1" fill="#fff" />
            <path d="M18 4.500h1a1 1 0 0 1 1 1v3a1 1 0 0 1-1 1h-1z" fill="#fff" />
          </svg>
        </TrayButton>
        <Clock>02:29 p. m.<br />16/10/2025</Clock>
      </Tray>
    </Taskbar>
  );
}

export default function App() {
  return (
    <Screen>
      <GlobalStyle />
      <Browser />
      <GeminiApp />
      <WindowsTaskbar />
    </Screen>
  );
}
